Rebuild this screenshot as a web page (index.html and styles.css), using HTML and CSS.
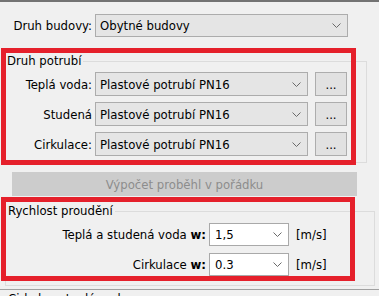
FILE: index.html
```html
<!DOCTYPE html>
<html lang="cs">
<head>
    <meta charset="UTF-8">
    <meta name="viewport" content="width=device-width, initial-scale=1.0">
    <title>Potrubí</title>
    <link rel="stylesheet" href="styles.css">
</head>
<body>

    <div class="panel">
        <div class="row building">
            <label class="lbl">Druh budovy:</label>
            <div class="combo wide">
                <span>Obytné budovy</span>
                <svg class="chev" width="9" height="5" viewBox="0 0 9 5"><path d="M0.5 0.5 L4.5 4.5 L8.5 0.5" fill="none" stroke="#6a6a6a" stroke-width="1"/></svg>
            </div>
        </div>

        <fieldset class="group pipes">
            <legend>Druh potrubí</legend>
            <div class="row">
                <label class="lbl">Teplá voda:</label>
                <div class="combo pipe">
                    <span>Plastové potrubí PN16</span>
                    <svg class="chev" width="9" height="5" viewBox="0 0 9 5"><path d="M0.5 0.5 L4.5 4.5 L8.5 0.5" fill="none" stroke="#6a6a6a" stroke-width="1"/></svg>
                </div>
                <button class="dots">...</button>
            </div>
            <div class="row">
                <label class="lbl">Studená</label>
                <div class="combo pipe">
                    <span>Plastové potrubí PN16</span>
                    <svg class="chev" width="9" height="5" viewBox="0 0 9 5"><path d="M0.5 0.5 L4.5 4.5 L8.5 0.5" fill="none" stroke="#6a6a6a" stroke-width="1"/></svg>
                </div>
                <button class="dots">...</button>
            </div>
            <div class="row">
                <label class="lbl">Cirkulace:</label>
                <div class="combo pipe">
                    <span>Plastové potrubí PN16</span>
                    <svg class="chev" width="9" height="5" viewBox="0 0 9 5"><path d="M0.5 0.5 L4.5 4.5 L8.5 0.5" fill="none" stroke="#6a6a6a" stroke-width="1"/></svg>
                </div>
                <button class="dots">...</button>
            </div>
        </fieldset>

        <button class="calc" disabled>Výpočet proběhl v pořádku</button>

        <fieldset class="group speed">
            <legend>Rychlost proudění</legend>
            <div class="row">
                <label class="lbl">Teplá a studená voda <b>w:</b></label>
                <div class="combo edit">
                    <span>1,5</span>
                    <svg class="chev" width="9" height="5" viewBox="0 0 9 5"><path d="M0.5 0.5 L4.5 4.5 L8.5 0.5" fill="none" stroke="#6a6a6a" stroke-width="1"/></svg>
                </div>
                <span class="unit">[m/s]</span>
            </div>
            <div class="row">
                <label class="lbl">Cirkulace <b>w:</b></label>
                <div class="combo edit">
                    <span>0.3</span>
                    <svg class="chev" width="9" height="5" viewBox="0 0 9 5"><path d="M0.5 0.5 L4.5 4.5 L8.5 0.5" fill="none" stroke="#6a6a6a" stroke-width="1"/></svg>
                </div>
                <span class="unit">[m/s]</span>
            </div>
        </fieldset>

        <div class="next">Cirkulace teplá vody</div>
    </div>

    <!-- zvýraznění -->
    <div class="mark mark-pipes"></div>
    <div class="mark mark-speed"></div>

</body>
</html>
```

FILE: styles.css
```css
body {
    margin: 0;
    background: #f0f0f0;
    font-family: "DejaVu Sans Condensed", "DejaVu Sans", sans-serif;
    font-size: 13px;
    color: #000;
    width: 379px;
    height: 296px;
    overflow: hidden;
    position: relative;
}
.panel {
    border-top: 2px solid #737373;
    display: flex;
    flex-direction: column;
}
.row {
    display: flex;
    align-items: center;
}
.lbl {
    text-align: right;
    white-space: nowrap;
}
.building {
    margin-top: 12px;
}
.building .lbl {
    width: 92px;
}
.combo {
    display: flex;
    align-items: center;
    justify-content: space-between;
    box-sizing: border-box;
    background: #e5e5e5;
    border: 1px solid #acacac;
    padding: 0 6px 0 4px;
    margin-left: 3px;
    white-space: nowrap;
}
.combo.wide {
    width: 253px;
    height: 23px;
}
.group {
    border: 1px solid #dcdcdc;
    padding: 0;
    min-width: 0;
}
.group legend {
    padding: 0 2px;
    line-height: 16px;
}
.pipes {
    margin: 16px 12px 0 4px;
    padding-bottom: 6px;
}
.pipes legend {
    margin-bottom: 3px;
}
.pipes .row + .row {
    margin-top: 6px;
}
.pipes .lbl {
    width: 87px;
}
.combo.pipe {
    width: 213px;
    height: 24px;
}
.dots {
    box-sizing: border-box;
    width: 32px;
    height: 24px;
    margin-left: 7px;
    background: #e1e1e1;
    border: 1px solid #adadad;
    font: inherit;
    padding: 0;
    color: #000;
}
.calc {
    box-sizing: border-box;
    margin: 9px 0 0 12px;
    width: 345px;
    height: 24px;
    background: #cccccc;
    border: none;
    font: inherit;
    color: #8d8d8d;
}
.speed {
    margin: 7px 4px 0 5px;
    padding-bottom: 9px;
}
.speed legend {
    margin-bottom: 4px;
}
.speed .row + .row {
    margin-top: 7px;
}
.speed .lbl {
    width: 200px;
}
.combo.edit {
    width: 80px;
    height: 23px;
    background: #fff;
    border-color: #a9a9a9;
    padding-left: 5px;
}
.unit {
    margin-left: 7px;
}
.next {
    margin-top: 3px;
    border-top: 1px solid #a0a0a0;
    padding: 1px 0 0 8px;
    line-height: 16px;
}
.mark {
    position: absolute;
    border: 5px solid #e5202b;
    box-sizing: border-box;
}
.mark-pipes {
    left: 1px;
    top: 48px;
    width: 355px;
    height: 117px;
}
.mark-speed {
    left: 1px;
    top: 197px;
    width: 354px;
    height: 84px;
}
```
